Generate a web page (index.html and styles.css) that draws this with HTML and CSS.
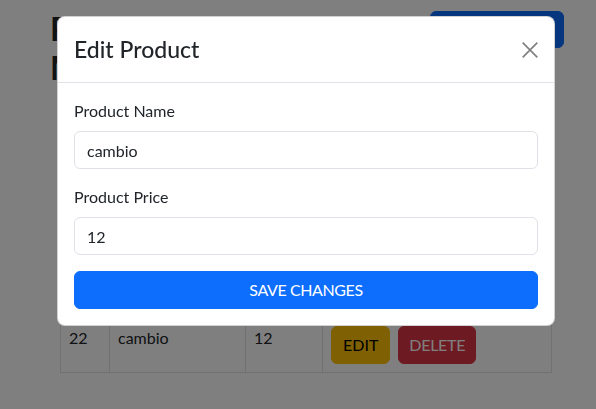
FILE: index.html
```html
<!DOCTYPE html>
<html lang="en">
<head>
<meta charset="utf-8">
<title>Products</title>
<link rel="stylesheet" href="styles.css">
</head>
<body>
<div class="page">
  <div class="topbar">
    <h1 class="title">Product Management</h1>
    <button class="btn btn-primary add-btn"></button>
  </div>
  <table class="table">
    <tbody>
      <tr class="spacer-row"><td></td><td></td><td></td><td></td></tr>
      <tr><td>22</td><td>cambio</td><td>12</td><td><button class="btn btn-warning">EDIT</button><button class="btn btn-danger">DELETE</button></td></tr>
    </tbody>
  </table>
</div>

<div class="backdrop"></div>

<div class="modal">
  <div class="modal-header">
    <h4 class="modal-title">Edit Product</h4>
    <button class="btn-close" aria-label="Close">
      <svg viewBox="0 0 16 16" width="18" height="18"><path d="M1.5 1.5 L14.5 14.5 M14.5 1.5 L1.5 14.5" stroke="currentColor" stroke-width="1.5" fill="none"/></svg>
    </button>
  </div>
  <div class="modal-body">
    <div class="field">
      <label class="label">Product Name</label>
      <input class="input" type="text" value="cambio">
    </div>
    <div class="field">
      <label class="label">Product Price</label>
      <input class="input" type="text" value="12">
    </div>
    <button class="btn btn-primary btn-block">SAVE CHANGES</button>
  </div>
</div>
</body>
</html>
```
FILE: styles.css
```css
* { box-sizing: border-box; }
html, body { margin: 0; padding: 0; }
body {
  font-family: "Segoe UI", "Lato", "Noto Sans", sans-serif;
  font-size: 16px;
  line-height: 24px;
  color: #212529;
  background: #fff;
  width: 596px;
  height: 409px;
  overflow: hidden;
}
.page {
  padding: 0 32px 0 50px;
}
.topbar {
  display: flex;
  justify-content: space-between;
  align-items: flex-start;
}
.title {
  margin: 9px 0 0;
  font-size: 32px;
  line-height: 39px;
  font-weight: 700;
  width: 300px;
}
.btn {
  font-family: inherit;
  font-size: 16px;
  line-height: 24px;
  border: 1px solid transparent;
  border-radius: 6px;
  padding: 6px 12px;
  cursor: pointer;
}
.btn-primary { background: #0d6efd; color: #fff; border-color: #0d6efd; }
.btn-warning { background: #ffc107; color: #000; border-color: #ffc107; padding: 6px 11px; }
.btn-danger { background: #dc3545; color: #fff; border-color: #dc3545; margin-left: 8px; padding: 6px 10px; letter-spacing: -0.3px; }
.add-btn { margin-top: 11px; width: 134px; height: 37px; }
.table {
  margin: 12px 0 0 10px;
  width: 492px;
  border-collapse: collapse;
  border: 1px solid #dee2e6;
}
.table td {
  border: 1px solid #dee2e6;
  padding: 8px;
  text-align: left;
  vertical-align: top;
}
.table td:nth-child(1) { width: 49px; }
.table td:nth-child(2) { width: 136px; }
.table td:nth-child(3) { width: 77px; }
.spacer-row td { height: 218px; }

.backdrop {
  position: fixed;
  inset: 0;
  background: rgba(0, 0, 0, 0.5);
}
.modal {
  position: absolute;
  left: 57px;
  top: 16px;
  width: 498px;
  background: #fff;
  border: 1px solid rgba(0, 0, 0, 0.175);
  border-radius: 8px;
}
.modal-header {
  display: flex;
  align-items: center;
  justify-content: space-between;
  padding: 16px 15px 16px 16px;
  border-bottom: 1px solid #dee2e6;
}
.modal-title {
  margin: 0;
  font-size: 23px;
  line-height: 33px;
  font-weight: 500;
}
.btn-close {
  border: 0;
  background: transparent;
  color: #808080;
  padding: 0;
  width: 18px;
  height: 18px;
  display: flex;
}
.modal-body {
  padding: 16px;
  display: flex;
  flex-direction: column;
}
.field {
  display: flex;
  flex-direction: column;
  margin-bottom: 16px;
}
.label {
  margin-bottom: 8px;
}
.input {
  font-family: inherit;
  font-size: 16px;
  line-height: 24px;
  color: #212529;
  padding: 6px 12px;
  border: 1px solid #dee2e6;
  border-radius: 6px;
  height: 38px;
  width: 100%;
  outline: none;
}
.btn-block { width: 100%; height: 38px; letter-spacing: -0.4px; }
```
